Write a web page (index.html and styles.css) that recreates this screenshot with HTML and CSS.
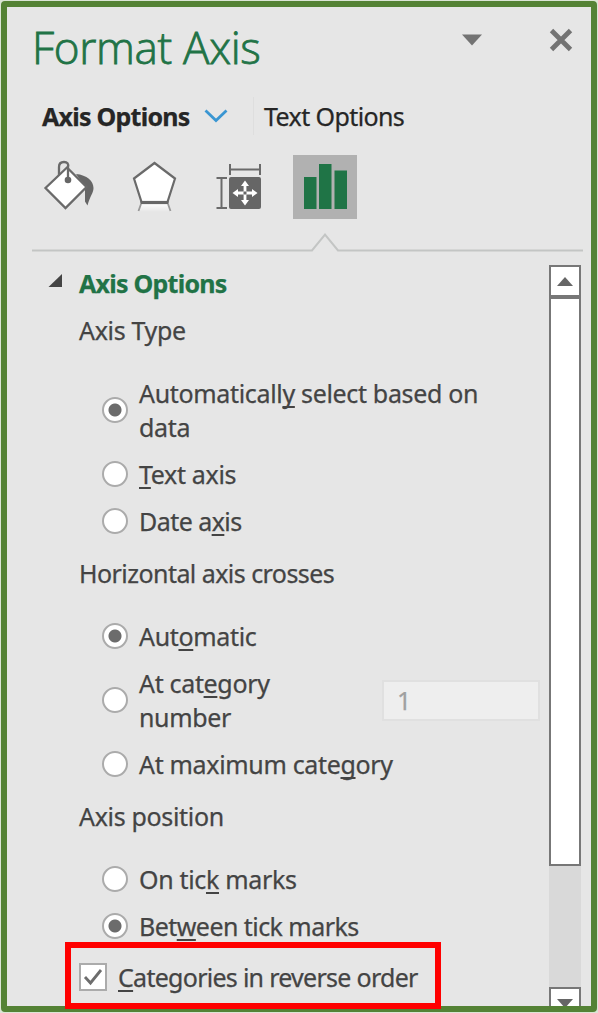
FILE: index.html
```html
<!DOCTYPE html>
<html lang="en">
  <head>
    <meta charset="UTF-8" />
    <meta name="viewport" content="width=device-width, initial-scale=1.0" />
    <title>Format Axis</title>
    <link rel="stylesheet" href="styles.css">
  </head>
  <body>
    <div class="panel">
      <div class="header">
        <h1>Format Axis</h1>
        <div class="window-buttons">
          <svg width="20" height="12" viewBox="0 0 20 12"><path d="M0 0.5h20l-10 11z" fill="#737373" /></svg>
          <svg width="24" height="24" viewBox="0 0 24 24"><path d="M2.5 2.5l19 19M21.5 2.5l-19 19" stroke="#737373" stroke-width="4.8" /></svg>
        </div>
      </div>

      <div class="tabs">
        <span class="tab active">Axis Options</span>
        <svg width="24" height="14" viewBox="0 0 24 14"><path d="M1.5 1.5l10.5 10 10.5-10" fill="none" stroke="#3a96d2" stroke-width="2.8" /></svg>
        <span class="divider"></span>
        <span class="tab">Text Options</span>
      </div>

      <div class="icons">
        <!-- fill -->
        <svg class="icon" width="64" height="64" viewBox="0 0 64 64">
          <path d="M42 19c11 1 17.500 7 17.500 14 0 5-3.500 8-6 17.500l-2.500-4V32z" fill="#666" />
          <path d="M33 12.500L52.500 32 31.500 53 11.500 33z" fill="#fff" stroke="#6a6a6a" stroke-width="2.300" />
          <path d="M25 20V12q0-5 5-5t4 5v11" fill="none" stroke="#6a6a6a" stroke-width="2.300" />
          <circle cx="34" cy="25" r="3.300" fill="#666" />
        </svg>
        <!-- effects -->
        <svg class="icon" width="64" height="64" viewBox="-1 0 64 64">
          <defs>
            <linearGradient id="reflection" x1="0" y1="0" x2="0" y2="1">
              <stop offset="0" stop-color="#fff" />
              <stop offset="1" stop-color="#fff" stop-opacity="0" />
            </linearGradient>
          </defs>
          <path d="M19 48h27l3 9H16z" fill="url(#reflection)" />
          <path d="M19 49l-2.500 7M46 49l2.500 7" stroke="#999" stroke-width="1.800" />
          <path d="M32.500 8L53 23.500 45.500 47H19.500L12 23.500z" fill="#fff" stroke="#6a6a6a" stroke-width="2.200" />
          <path d="M18.500 47.500h28" stroke="#666" stroke-width="3.200" />
        </svg>
        <!-- size and properties -->
        <svg class="icon" width="64" height="64" viewBox="0 0 64 64">
          <path d="M22 9v11M52 9v11M22 14.500H52M8.500 23h10.500M8.500 53h10.500M13.500 23V53" fill="none" stroke="#6a6a6a" stroke-width="2" />
          <rect x="21" y="22" width="32" height="32" rx="2" fill="#666" />
          <path d="M28 38h18M37 29v18" stroke="#fff" stroke-width="2.800" />
          <path d="M24.500 38l5.500-4v8zM49.500 38l-5.500-4v8zM37 25.500l-4 5.500h8zM37 50.500l-4-5.500h8z" fill="#fff" />
          <rect x="35.500" y="36.500" width="3" height="3" fill="#666" />
        </svg>
        <!-- axis options -->
        <svg class="icon selected" width="64" height="64" viewBox="0 0 64 64">
          <path d="M11 22h12.500v32H11zM26 9h12.500v45H26zM41.500 15.500H54V54H41.500z" fill="#1f7446" />
        </svg>
      </div>

      <svg class="rule" width="552" height="20" viewBox="0 0 552 20">
        <path d="M0 18.500h280l13-16 13 16h245" fill="none" stroke="#c3c5c4" stroke-width="2" />
      </svg>

      <div class="content">
        <div class="options">
          <div class="section">
            <svg width="14" height="14" viewBox="0 0 14 14"><path d="M14 0v13H0.500z" fill="#444" /></svg>
            <h2>Axis Options</h2>
          </div>

          <div class="group-title">Axis Type</div>
          <div class="group">
            <div class="option"><span class="radio checked"></span><span>Automaticall<u>y</u> select based on<br>data</span></div>
            <div class="option"><span class="radio"></span><span><u>T</u>ext axis</span></div>
            <div class="option tight"><span class="radio"></span><span>Date a<u>x</u>is</span></div>
          </div>

          <div class="group-title tight">Horizontal axis crosses</div>
          <div class="group">
            <div class="option"><span class="radio checked"></span><span>Aut<u>o</u>matic</span></div>
            <div class="option">
              <span class="radio"></span><span>At cat<u>e</u>gory<br>number</span>
              <span class="number">1</span>
            </div>
            <div class="option"><span class="radio"></span><span>At maximum cate<u>g</u>ory</span></div>
          </div>

          <div class="group-title">Axis position</div>
          <div class="group">
            <div class="option"><span class="radio"></span><span>On tic<u>k</u> marks</span></div>
            <div class="option tight"><span class="radio checked"></span><span>Bet<u>w</u>een tick marks</span></div>
          </div>

          <div class="check-row">
            <span class="checkbox">
              <svg width="20" height="20" viewBox="0 0 20 20"><path d="M2 10l5.500 6L18 3" fill="none" stroke="#6d6d6d" stroke-width="2.800" /></svg>
            </span>
            <span><u>C</u>ategories in reverse order</span>
          </div>
        </div>

        <div class="scrollbar">
          <div class="arrow"><svg width="16" height="9" viewBox="0 0 16 9"><path d="M0 9l8-9 8 9z" fill="#666" /></svg></div>
          <div class="thumb"></div>
          <div class="track"></div>
          <div class="arrow"><svg width="16" height="9" viewBox="0 0 16 9"><path d="M0 0h16L8 9z" fill="#666" /></svg></div>
        </div>
      </div>
      <div class="highlight"></div>
    </div>
  </body>
</html>
```
FILE: styles.css
```css
:root {
  --frame: #548235;
  --panel: #e6e6e6;
  --green: #217346;
  --text: #444;
  --line: #777;
}

* {
  box-sizing: border-box;
}

body {
  margin: 0;
  padding: 1px;
  height: 1013px;
  overflow: hidden;
  background: #dbe5d5;
  font-family: "Noto Sans", "Open Sans", sans-serif;
  font-size: 25px;
  line-height: 34px;
  letter-spacing: -0.33px;
  color: var(--text);
  -webkit-text-stroke: 0.25px;
}

.panel {
  position: relative;
  display: flex;
  flex-direction: column;
  width: 596px;
  height: 1011px;
  border: 6px solid var(--frame);
  border-radius: 4px;
  background: var(--panel);
}

.header {
  display: flex;
  justify-content: space-between;
  height: 80px;
  padding: 10px 18px 0 25px;
}

h1 {
  margin: 0;
  font-family: "Open Sans", sans-serif;
  font-size: 44px;
  font-weight: 300;
  line-height: 60px;
  color: var(--green);
  -webkit-text-stroke: 0.8px;
}

.window-buttons {
  display: flex;
  align-items: center;
  gap: 67px;
  height: 46px;
}

.tabs {
  display: flex;
  align-items: center;
  height: 58px;
  padding-left: 35px;
  letter-spacing: -0.6px;
  color: #262626;
}

.tab.active {
  width: 149px;
  font-weight: 700;
  letter-spacing: -0.75px;
  white-space: nowrap;
}

.tabs svg {
  margin-left: 13px;
}

.divider {
  width: 1px;
  height: 38px;
  margin: 0 10px 0 25px;
  background: #dedede;
}

.icons {
  display: flex;
  gap: 23px;
  height: 83px;
  padding: 10px 0 0 27px;
}

.icon.selected {
  margin-left: -2px;
  background: #b1b1b1;
}

.rule {
  flex: none;
  margin: 4px 0 0 25px;
}

.content {
  display: flex;
  flex: 1;
  min-height: 0;
  margin-top: 13px;
}

.options {
  width: 542px;
  padding: 1px 9px 0 41px;
}

.section {
  display: flex;
  align-items: center;
  gap: 17px;
}

.section svg {
  margin-bottom: 5px;
}

h2 {
  margin: 0;
  font-size: 25px;
  font-weight: 700;
  letter-spacing: -0.75px;
  color: var(--green);
}

.group-title {
  margin: 13px 0 0 31px;
}

.group-title + .group {
  margin-top: 29px;
}

.group {
  display: flex;
  flex-direction: column;
  gap: 13px;
  padding-left: 54px;
}

.group + .group-title {
  margin-top: 18px;
}

.option {
  display: flex;
  align-items: center;
  gap: 11px;
  white-space: nowrap;
}

.tight {
  letter-spacing: -0.55px;
}

u {
  text-decoration-thickness: 2px;
  text-decoration-skip-ink: none;
  text-underline-offset: 3px;
}

.radio {
  flex: none;
  width: 26px;
  height: 26px;
  border: 2px solid #ababab;
  border-radius: 50%;
  background: #fff;
}

.radio.checked {
  background: radial-gradient(circle, #6c6c6c 6px, #fff 7px);
}

.number {
  width: 158px;
  height: 41px;
  margin-left: auto;
  padding: 1px 13px;
  border: 2px solid #e0e0e0;
  background: #eee;
  color: #a0a0a0;
}

.check-row {
  display: flex;
  align-items: center;
  gap: 11px;
  margin: 17px 0 0 31px;
  letter-spacing: -0.72px;
  white-space: nowrap;
}

.checkbox {
  display: flex;
  align-items: center;
  justify-content: center;
  width: 28px;
  height: 28px;
  border: 2px solid #ababab;
  background: #fff;
}

.scrollbar {
  display: flex;
  flex-direction: column;
  width: 32px;
  overflow: hidden;
  background: #d9d9d9;
}

.arrow {
  display: flex;
  flex: none;
  align-items: center;
  justify-content: center;
  height: 32px;
  border: 2px solid var(--line);
  background: #fff;
}

.thumb {
  flex: none;
  height: 569px;
  border: 2px solid var(--line);
  background: #fff;
}

.track {
  flex: none;
  height: 121px;
}

/* callout around the last option, runs over the frame */
.highlight {
  position: absolute;
  left: 58px;
  top: 935px;
  width: 376px;
  height: 67px;
  border: 6px solid #f00;
}
```
